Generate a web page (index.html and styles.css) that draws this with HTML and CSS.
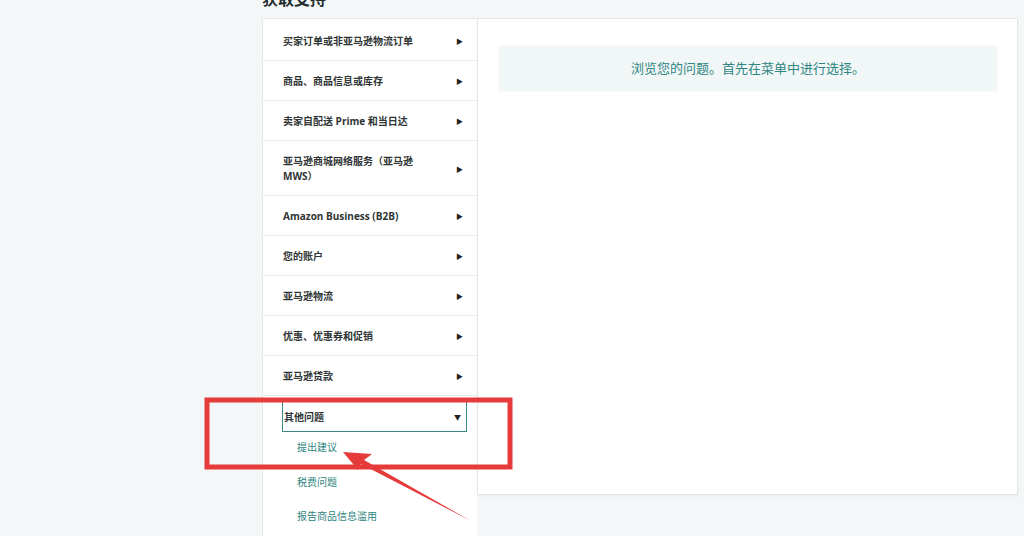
FILE: index.html
```
<!DOCTYPE html>
<html lang="zh-CN">
<head>
    <meta charset="UTF-8">
    <title>获取支持</title>
    <link rel="stylesheet" href="styles.css">
</head>
<body>
    <div class="page">
        <h1 class="page-title">获取支持</h1>

        <div class="support">
            <ul class="menu">
                <li class="menu-item"><span class="label">买家订单或非亚马逊物流订单</span><span class="arrow">&#9654;</span></li>
                <li class="menu-item"><span class="label">商品、商品信息或库存</span><span class="arrow">&#9654;</span></li>
                <li class="menu-item"><span class="label">卖家自配送 Prime 和当日达</span><span class="arrow">&#9654;</span></li>
                <li class="menu-item"><span class="label">亚马逊商城网络服务（亚马逊 MWS）</span><span class="arrow">&#9654;</span></li>
                <li class="menu-item"><span class="label">Amazon Business (B2B)</span><span class="arrow">&#9654;</span></li>
                <li class="menu-item"><span class="label">您的账户</span><span class="arrow">&#9654;</span></li>
                <li class="menu-item"><span class="label">亚马逊物流</span><span class="arrow">&#9654;</span></li>
                <li class="menu-item"><span class="label">优惠、优惠券和促销</span><span class="arrow">&#9654;</span></li>
                <li class="menu-item"><span class="label">亚马逊贷款</span><span class="arrow">&#9654;</span></li>
                <li class="menu-group">
                    <div class="menu-open"><span class="label">其他问题</span><span class="arrow-down">&#9660;</span></div>
                    <ul class="submenu">
                        <li>提出建议</li>
                        <li>税费问题</li>
                        <li>报告商品信息滥用</li>
                    </ul>
                </li>
            </ul>

            <div class="content">
                <div class="hint">浏览您的问题。首先在菜单中进行选择。</div>
            </div>
        </div>
    </div>

    <!-- red annotation drawn over the screenshot -->
    <svg class="markup" width="1024" height="536" viewBox="0 0 1024 536">
        <rect x="207" y="400" width="303" height="67" fill="none" stroke="#e63b3b" stroke-width="5"/>
        <polygon points="343,452 372,454 364,460 471,521 361,464 358,470" fill="#e63b3b"/>
    </svg>
</body>
</html>
```

FILE: styles.css
```
body {
    margin: 0;
    background-color: #f3f7f7;
    font-family: "Open Sans", "Noto Sans CJK SC", sans-serif;
    color: #2f3535;
    overflow: hidden;
}

.page {
    margin-left: 262px;
    width: 756px;
}

.page-title {
    margin: -10px 0 10px 0;
    font-size: 16px;
    line-height: 18px;
    font-weight: bold;
    color: #232f2f;
}

.support {
    display: grid;
    grid-template-columns: 215px 1fr;
    align-items: start;
}

.menu {
    list-style: none;
    margin: 0;
    padding: 2px 0 0 0;
    background-color: #fff;
    border: 1px solid #e6e9e9;
    border-right: none;
    min-height: 600px;
}

.menu-item {
    display: flex;
    align-items: center;
    padding: 13px 14px 11px 20px;
    border-bottom: 1px solid #e7eaea;
    font-size: 10px;
    line-height: 15px;
    font-weight: bold;
}

.menu-item .label {
    flex: 1;
    max-width: 150px;
    margin-right: auto;
}

.arrow {
    font-size: 7px;
    color: #222;
}

.menu-group {
    padding: 5px 10px 0 19px;
}

.menu-open {
    display: flex;
    align-items: center;
    justify-content: space-between;
    height: 29px;
    padding: 0 5px 0 1px;
    border: 1.5px solid #3b8882;
    border-top-color: #d9e6e5;
    font-size: 10px;
    font-weight: bold;
}

.arrow-down {
    font-size: 7px;
    color: #222;
}

.submenu {
    list-style: none;
    margin: 0;
    padding: 8px 0 0 15px;
}

.submenu li {
    height: 34.5px;
    font-size: 10px;
    line-height: 14px;
    color: #2e8580;
}

.content {
    height: 477px;
    box-sizing: border-box;
    background-color: #fff;
    border: 1px solid #e2e6e6;
    box-shadow: 0 1px 2px rgba(0, 0, 0, 0.05);
    padding: 27px 20px 0 21px;
}

.hint {
    height: 45px;
    line-height: 45px;
    text-align: center;
    background-color: #f1f6f6;
    color: #2f8683;
    font-size: 13px;
    box-shadow: 0 0 3px rgba(0, 0, 0, 0.04);
}

.markup {
    position: absolute;
    left: 0;
    top: 0;
    pointer-events: none;
}
```
